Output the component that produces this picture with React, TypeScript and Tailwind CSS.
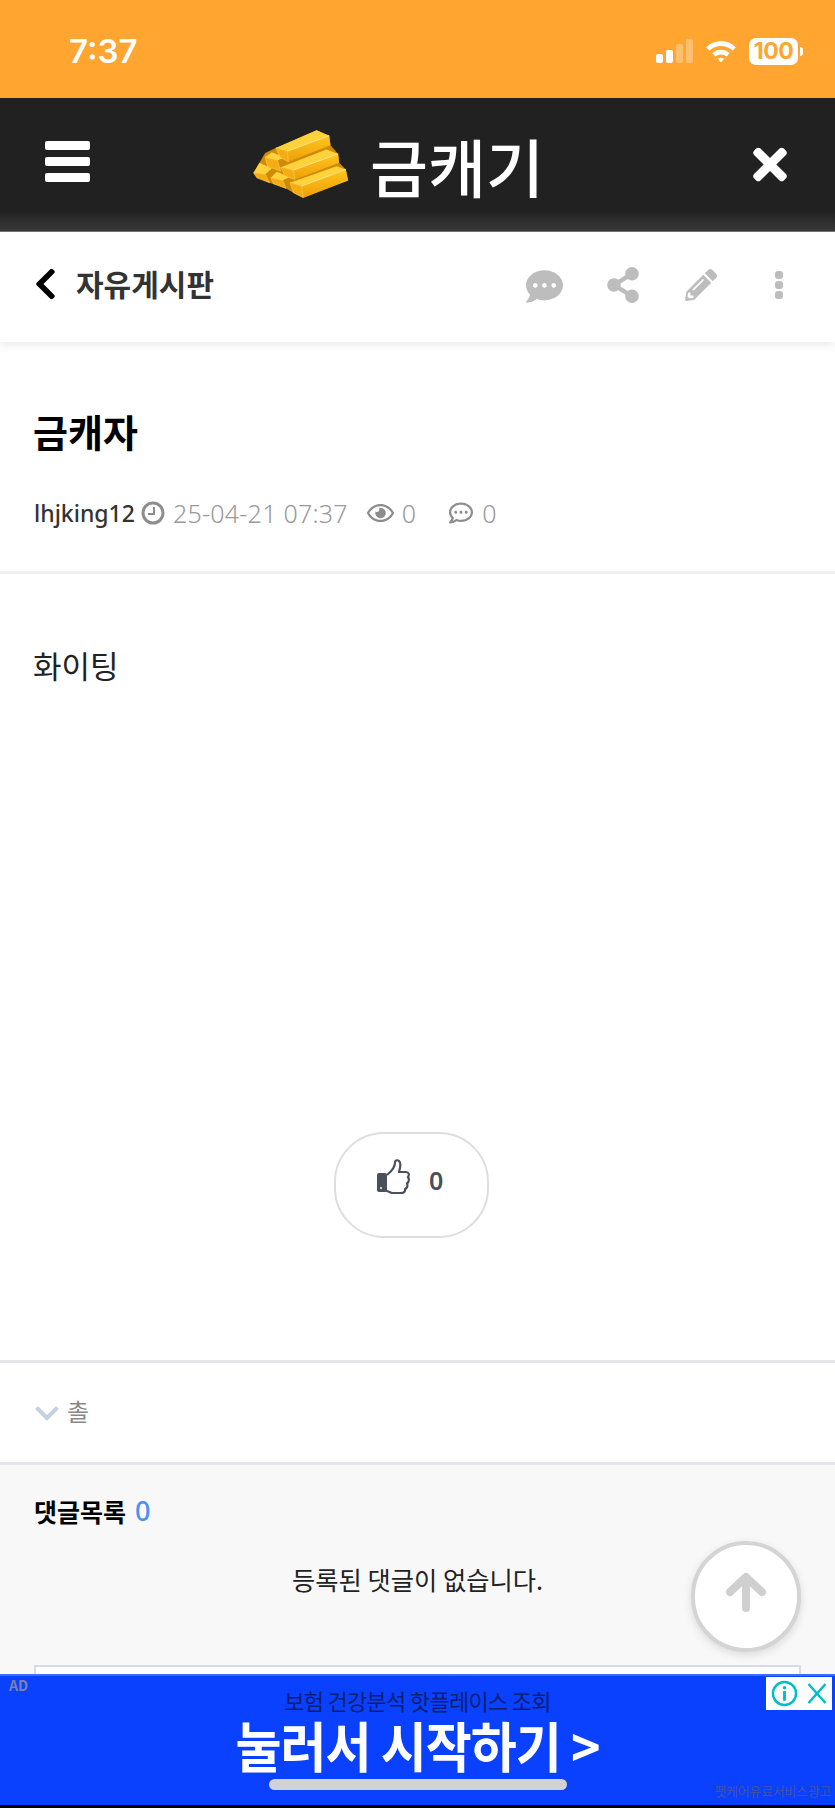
import React from 'react'
import {
  FaTimes,
  FaChevronLeft,
  FaChevronDown,
  FaCommentDots,
  FaRegCommentDots,
  FaShareAlt,
  FaPencilAlt,
  FaRegEye,
} from 'react-icons/fa'

const KR = "font-['Noto_Sans_CJK_KR','Noto_Sans',sans-serif]"

// one bar of the pile: top face, long front face, short end
function Bar({ top, front, end }: { top: string; front?: string; end: string }) {
  return (
    <g>
      {front && <polygon points={front} fill="url(#barFront)" />}
      <polygon points={top} fill="#ffd23c" />
      <polygon points={end} fill="#f5ab12" stroke="#ffd968" strokeWidth="1.500" />
    </g>
  )
}

function GoldLogo() {
  return (
    <svg width="100" height="73" viewBox="60 90 300 220" className="shrink-0">
      <defs>
        <linearGradient id="barFront" x1="0" y1="0" x2="0" y2="1">
          <stop offset="0" stopColor="#ffc51f" />
          <stop offset="1" stopColor="#ee9f05" />
        </linearGradient>
      </defs>
      <polygon points="70,225 105,165 137,150 260,97 298,113 302,142 325,168 328,195 348,215 355,248 220,300 190,285 168,272 118,255 80,240" fill="#cf8a06" />
      <Bar top="105,178 125,163 165,178 142,188" end="105,178 142,188 152,220 112,205" />
      <Bar top="70,225 88,195 125,212 105,230" end="70,225 105,230 118,255 80,240" />
      <Bar top="122,240 140,222 178,238 158,248" end="122,240 158,248 168,272 130,258" />
      <Bar top="137,150 260,97 298,113 172,160" front="172,160 298,113 302,142 175,192" end="137,150 172,160 175,192 150,178" />
      <Bar top="152,208 290,155 325,168 190,217" front="190,217 325,168 328,195 195,245" end="152,208 190,217 195,245 165,235" />
      <Bar top="180,255 320,205 348,215 215,265" front="215,265 348,215 355,248 220,300" end="180,255 215,265 220,300 190,285" />
      <path d="M172 160 L298 113 M190 217 L325 168 M215 265 L348 215" stroke="#ffe58a" strokeWidth="3" />
    </svg>
  )
}

function StatusIcons() {
  return (
    <div className="flex items-center">
      <div className="flex items-end gap-[3px] h-[24px]">
        <span className="w-[7px] h-[9px] rounded-[2px] bg-white" />
        <span className="w-[7px] h-[13px] rounded-[2px] bg-white" />
        <span className="w-[7px] h-[19px] rounded-[2px] bg-white/30" />
        <span className="w-[7px] h-[24px] rounded-[2px] bg-white/30" />
      </div>
      <svg width="34" height="24" viewBox="0 0 34 26" className="ml-[11px]">
        <path d="M1 9 C10 0 24 0 33 9 L29.5 12.6 C22.5 6 11.5 6 4.5 12.6 Z" fill="#fff" />
        <path d="M7.5 15.5 C13 10.5 21 10.5 26.500 15.5 L23 19 C19.5 16 14.500 16 11 19 Z" fill="#fff" />
        <path d="M13.500 21.500 C15.500 20 18.500 20 20.500 21.500 L17 25.500 Z" fill="#fff" />
      </svg>
      <div className="ml-[11px] w-[49px] h-[27px] rounded-[7px] bg-white flex items-center justify-center text-[23px] leading-none font-bold tracking-[-0.5px] text-[#ffa530] font-['Inter',sans-serif]">
        100
      </div>
      <span className="ml-[2px] w-[3px] h-[9px] rounded-r-sm bg-white" />
    </div>
  )
}

function ThumbIcon() {
  return (
    <svg width="33" height="35" viewBox="0 0 33 35" className="shrink-0">
      <rect x="0" y="14" width="10" height="19" rx="2" fill="#49505a" />
      <circle cx="4" cy="29" r="1" fill="#fff" />
      <path
        d="M10 16 C15 12 18 8 18 3.500 C18 0.500 22 0.500 23 3.500 C24 7 23 10 22 13 L29 13 C32 13 32.500 16 31 18 C32.500 20 32 23 30 24.500 C31 27 30 29.500 28 30 C28.500 33 26.500 34 24 34 L16 34 C13 34 12 32 9 32"
        fill="none"
        stroke="#49505a"
        strokeWidth="2.200"
        strokeLinejoin="round"
      />
    </svg>
  )
}

export default function App() {
  return (
    <div className={`relative w-[835px] h-[1808px] overflow-hidden bg-white flex flex-col ${KR}`}>
      <div className="h-[98px] shrink-0 bg-[#ffa530] flex items-center justify-between pl-[69px] pr-[32px] pt-[4px]">
        <span className="text-[33px] font-semibold leading-none text-white font-['Inter',sans-serif]">7:37</span>
        <StatusIcons />
      </div>

      <header className="relative h-[134px] shrink-0 bg-gradient-to-b from-[#212121] from-[85%] to-[#3a3a3a] border-b border-[#777] flex items-center justify-between pl-[45px] pr-[48px]">
        <div className="flex flex-col gap-[7px] mt-[-7px]">
          <span className="w-[45px] h-[9px] rounded-[2px] bg-white" />
          <span className="w-[45px] h-[9px] rounded-[2px] bg-white" />
          <span className="w-[45px] h-[9px] rounded-[2px] bg-white" />
        </div>
        <div className="absolute left-[250px] top-0 h-full flex items-center gap-[20px]">
          <GoldLogo />
          <span className="text-[63px] leading-none font-medium text-white">금캐기</span>
        </div>
        <FaTimes className="text-white w-[34px] h-[49px]" />
      </header>

      <div className="relative z-10 h-[110px] shrink-0 bg-white shadow-[0_2px_10px_rgba(0,0,0,0.1)] flex items-center pl-[34px] pr-[52px]">
        <FaChevronLeft className="w-[23px] h-[36px] text-black mt-[-6px]" />
        <span className="ml-[19px] text-[30px] leading-none font-bold text-[#333] mt-[-8px]">자유게시판</span>
        <div className="ml-auto flex items-center text-[#bdbdbd]">
          <FaCommentDots className="w-[37px] h-[37px] mt-[-1px]" />
          <FaShareAlt className="ml-[44px] w-[32px] h-[36px] mt-[-5px]" />
          <FaPencilAlt className="ml-[46px] w-[32px] h-[32px] mt-[-5px]" />
          <div className="ml-[58px] flex flex-col gap-[2px] mt-[-5px]">
            <span className="w-[8px] h-[8px] rounded-[3px] bg-[#bdbdbd]" />
            <span className="w-[8px] h-[8px] rounded-[3px] bg-[#bdbdbd]" />
            <span className="w-[8px] h-[8px] rounded-[3px] bg-[#bdbdbd]" />
          </div>
        </div>
      </div>

      <div className="px-[33px] pt-[64px] h-[232px] shrink-0 border-b-[3px] border-[#f0f0f0]">
        <h1 className="text-[38px] leading-[50px] font-bold text-black">금캐자</h1>
        <div className="mt-[39px] flex items-center text-[25px] leading-[36px] text-[#999] font-['Noto_Sans',sans-serif] font-light">
          <span className="font-medium text-[#333] ml-[1px] text-[23px]">lhjking12</span>
          <svg width="24" height="24" viewBox="0 0 24 24" className="ml-[6px] mr-[8px]">
            <circle cx="12" cy="12" r="10" fill="none" stroke="#8d8d8d" strokeWidth="3" />
            <path d="M13 6 V13 H7" fill="none" stroke="#8d8d8d" strokeWidth="2" />
          </svg>
          <span className="tracking-[0.25px]">25-04-21 07:37</span>
          <FaRegEye className="ml-[19px] w-[27px] h-[24px] text-[#8d8d8d]" />
          <span className="ml-[8px]">0</span>
          <FaRegCommentDots className="ml-[32px] w-[26px] h-[24px] text-[#8d8d8d]" />
          <span className="ml-[8px]">0</span>
        </div>
      </div>

      <div className="h-[789px] shrink-0 px-[33px] pt-[69px] border-b-[3px] border-[#e6e6ea] flex flex-col">
        <p className="text-[31px] leading-[44px] text-[#222]">화이팅</p>
        <div className="self-start ml-[301px] mt-[445px] w-[155px] h-[106px] rounded-[50px] border-2 border-[#dedede] flex items-start pl-[41px] pt-[25px] gap-[19px] text-[#49505a]">
          <ThumbIcon />
          <span className="text-[25px] leading-[36px] mt-[3px] font-semibold font-['Noto_Sans',sans-serif]">0</span>
        </div>
      </div>

      <div className="h-[102px] shrink-0 flex items-center pl-[35px] border-b-[3px] border-[#e6e6ea]">
        <FaChevronDown className="w-[24px] h-[27px] text-[#c5d0e0] mt-[2px]" />
        <span className="ml-[8px] text-[24px] leading-none text-[#888] mt-[-4px]">촐</span>
      </div>

      <section className="flex-1 bg-[#f8f8f8] px-[34px] pt-[29px]">
        <div className="flex items-center gap-[9px] text-[25px] leading-[34px] font-bold text-black">
          댓글목록
          <span className="text-[#4a90f5] font-medium font-['Noto_Sans',sans-serif] text-[27px]">0</span>
        </div>
        <p className="mt-[33px] text-center text-[25.3px] leading-[36px] text-[#222]">등록된 댓글이 없습니다.</p>
        <div className="mt-[68px] h-[40px] border-2 border-[#d8dce2] bg-white" />
      </section>

      <button className="absolute left-[691px] top-[1541px] w-[110px] h-[111px] rounded-full bg-white border-[4px] border-[#d4d4d4] shadow-[0_3px_8px_rgba(0,0,0,0.12)] flex items-center justify-center">
        <svg width="42" height="40" viewBox="0 0 42 40" className="mt-[-10px]">
          <path d="M21 36 V6 M5 20 L21 5 L37 20" fill="none" stroke="#cfcfcf" strokeWidth="8" strokeLinecap="round" strokeLinejoin="round" />
        </svg>
      </button>

      <div className="absolute left-0 right-0 top-[1674px] h-[131px] bg-[#0a40ff] border-t-2 border-[#3f6cff]">
        <span className="absolute left-[9px] top-[-1px] text-[14px] leading-[20px] font-bold text-[#7d82a8]">AD</span>
        <p className="absolute left-0 w-full top-[11px] text-center text-[22px] leading-[26px] text-[#0b1f6e] tracking-[-0.7px]">보험 건강분석 핫플레이스 조회</p>
        <p className="absolute left-0 w-full top-[45px] text-center text-[50px] leading-[46px] font-bold text-white tracking-[-1px] scale-y-[1.08]">눌러서 시작하기 &gt;</p>
        <div className="absolute left-[269px] top-[103px] w-[298px] h-[11px] rounded-full bg-[#d1d1d6]" />
        <span className="absolute right-[4px] top-[105px] text-[13px] leading-[20px] text-[#46539a] tracking-[-0.3px]">펫케어유료서비스광고</span>
        <div className="absolute right-[3px] top-[1px] w-[66px] h-[33px] bg-white flex items-center justify-center gap-[9px]">
          <svg width="27" height="27" viewBox="0 0 28 28">
            <circle cx="14" cy="14" r="12" fill="none" stroke="#00bcd0" strokeWidth="2.500" />
            <circle cx="14" cy="8" r="1.800" fill="#00bcd0" />
            <rect x="12.500" y="11.500" width="3" height="10" fill="#00bcd0" />
          </svg>
          <svg width="20" height="21" viewBox="0 0 20 21">
            <path d="M1.500 1 L18.500 20 M18.500 1 L1.500 20" stroke="#00bcd0" strokeWidth="2.500" />
          </svg>
        </div>
      </div>
      <div className="absolute left-0 right-0 bottom-0 h-[3px] bg-black" />
    </div>
  )
}
